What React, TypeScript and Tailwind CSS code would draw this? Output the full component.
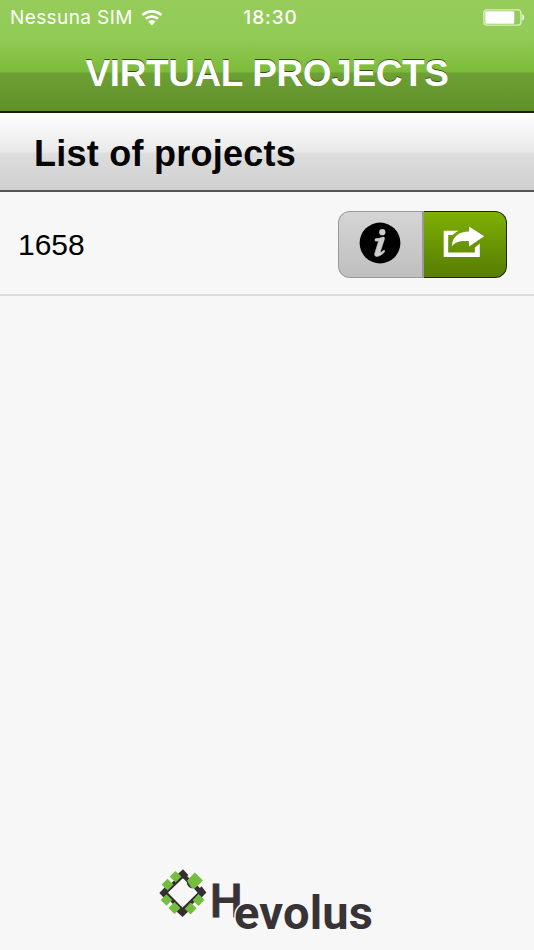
const projects = [{ id: 1, name: "1658" }];

function WifiIcon() {
  return (
    <svg width="22" height="18" viewBox="0 0 22 18" fill="none" stroke="white" strokeWidth="2.7">
      <path d="M1.4 6C7 1.1 14.8 1.1 20.4 6" />
      <path d="M4.8 9.8C8.3 6.7 13.5 6.7 17 9.8" />
      <path d="M10.9 16.4L7.2 12.6C9.2 10.9 12.6 10.9 14.6 12.6Z" fill="white" stroke="none" />
    </svg>
  );
}

function BatteryIcon() {
  return (
    <svg width="42" height="17" viewBox="0 0 42 17" fill="none">
      <rect x="0.9" y="0.9" width="37" height="15.2" rx="2.8" stroke="white" strokeOpacity="0.65" strokeWidth="1.4" />
      <rect x="2.3" y="2.2" width="29" height="12.6" rx="1" fill="white" />
      <path d="M39.3 5.2C41.7 5.8 41.7 10.9 39.3 11.5Z" fill="white" />
    </svg>
  );
}

function InfoIcon() {
  return (
    <svg width="42" height="42" viewBox="0 0 42 42">
      <circle cx="21" cy="21" r="20.4" fill="black" />
      <circle cx="23.3" cy="10.2" r="3.1" fill="#cdcdcd" />
      <path
        d="M17 16.6C20 16.6 22 15.9 24.2 15.1C25.4 15.1 25.7 16 25.3 17.4L21.2 30C21.5 30.9 23 29.5 24.5 28.4C25.6 27.9 26.2 28.9 25.4 29.9C23.5 32.3 20.2 34.5 17.6 34.5C15.7 34.3 15.4 32.9 15.9 31.1L19.4 19.7C19.5 18.9 18.3 19.1 17 19.2C15.5 18.9 15.5 16.9 17 16.6Z"
        fill="#cdcdcd"
        stroke="#cdcdcd"
        strokeWidth="0.6"
      />
    </svg>
  );
}

function ShareIcon() {
  return (
    <svg width="42" height="32" viewBox="0 0 42 32" fill="white">
      <path d="M0.7 4.7H15.7C13.1 6 11.2 7.3 9.8 9.1H5.2V26.4H31.8V21.8L36.8 17.6V31H0.7Z" />
      <path d="M8.8 20.4C9.3 10.2 16 5.5 26 5.4V0.5L41.2 10.2L26 20.6V15.2C18.5 14.4 12.8 15.1 8.8 20.4Z" />
    </svg>
  );
}

function Logo() {
  return (
    <svg className="overflow-visible" width="214" height="64" viewBox="160 868 214 64" aria-label="Hevolus">
      <path d="M193.5 886L183 875L165 892.5L182.5 910.5L201 892.5L195.5 887" fill="none" stroke="#332f31" strokeWidth="4.6" />
      <g fill="#332f31">
        <path d="M183 869.3L188.3 875L183.5 879.8L177.3 874.5Z" />
        <path d="M159.4 893L164.8 887.2L169 893L164.8 898.8Z" />
        <path d="M176 911L182.5 904.7L188.8 911L182.5 917Z" />
        <path d="M196 892L201.5 886.2L206.4 892.5L200.5 898.8Z" />
      </g>
      <path d="M183 878.2L168 892.8L182.5 907.5L197.6 892.5L191.8 887.5L187 883Z" fill="#f7f7f7" />
      <path d="M187 880.5C186.2 885.5 189.4 888.9 194 888.2Z" fill="#332f31" />
      <g fill="#74bd3e">
        <path d="M187 880.4L194.8 872.5L203 880.5L194.5 888.5L191 887.5Z" />
        <path d="M175.5 870.9L181.4 876.5L175.6 882.4L169.7 876.6Z" />
        <path d="M167.5 878.7L173.5 884.5L167.6 890.5L161.7 884.6Z" />
        <path d="M166.5 894.2L172.3 900L166.5 905.8L160.7 900Z" />
        <path d="M174.5 902.1L180.5 908L174.5 914L168.5 908.1Z" />
        <path d="M190.7 902.4L196.6 908.3L190.5 914.5L184.7 908.8Z" />
        <path d="M198.5 894.1L204.5 900L198.5 906L192.6 900.2Z" />
      </g>
      <text x="209.8" y="917" fill="#383335" stroke="#383335" strokeWidth="0.8" fontSize="46.5" fontWeight="500" fontFamily="Roboto, sans-serif" textLength="33" lengthAdjust="spacingAndGlyphs">
        H
      </text>
      <text
        x="234"
        y="928.5"
        fill="#383335"
        stroke="#f7f7f7"
        strokeWidth="3"
        paintOrder="stroke"
        fontSize="47"
        fontWeight="700"
        fontFamily="Roboto, sans-serif"
        textLength="139"
        lengthAdjust="spacing"
      >
        evolus
      </text>
    </svg>
  );
}

function App() {
  return (
    <div className="flex h-[950px] w-[534px] flex-col overflow-hidden bg-[#f7f7f7] font-['Liberation_Sans',Arial,sans-serif]">
      <header className="h-[113px] border-b-2 border-[#1a1f12] bg-[linear-gradient(to_bottom,#95cc5a_0px,#93cb57_38px,#7cbb38_72px,#6da034_73px,#5f9029_111px)] text-white">
        <div className="grid h-[35px] grid-cols-3 items-center pr-[9px] pl-[10px] font-[Inter,sans-serif] text-[19px]">
          <div className="flex items-center gap-[8px]">
            <span className="pt-[2px] tracking-[0.4px] whitespace-nowrap">Nessuna SIM</span>
            <WifiIcon />
          </div>
          <span className="pt-[2px] pl-[6px] text-center font-medium tracking-[0.9px]">18:30</span>
          <div className="flex justify-end">
            <BatteryIcon />
          </div>
        </div>
        <h1 className="pt-px text-center text-[37px] leading-[76px] font-bold tracking-[-0.4px] [text-shadow:0_-1.5px_0.5px_#2f5010]">
          VIRTUAL PROJECTS
        </h1>
      </header>

      <div className="h-[79px] border-b-2 border-[#555] bg-[linear-gradient(to_bottom,#ffffff_0px,#e9e9e9_39px,#dedede_40px,#cfcfcf_77px)] pl-[34px]">
        <h2 className="pt-px text-[36px] leading-[80px] font-bold tracking-[0.25px] text-[#050505]">List of projects</h2>
      </div>

      <ul>
        {projects.map((project) => (
          <li key={project.id} className="flex h-[104px] items-center justify-between border-b-2 border-[#dcdcdc] pt-[2px] pr-[27px] pl-[18px]">
            <span className="text-[30px] text-black">{project.name}</span>
            <div className="flex h-[67px] w-[169px]">
              <button className="flex w-[86px] items-center justify-center rounded-l-[12px] border border-r-2 border-[#999] bg-linear-to-b from-[#d5d5d5] to-[#bfbfbf] pr-px pb-[2px]">
                <InfoIcon />
              </button>
              <button className="flex w-[83px] items-center justify-center rounded-r-[12px] border border-l-0 border-[#1d2b05] bg-linear-to-b from-[#7eb004] to-[#577d03] pr-[3px] pb-[4px]">
                <ShareIcon />
              </button>
            </div>
          </li>
        ))}
      </ul>

      <footer className="mt-auto flex pb-[18px] pl-[160px]">
        <Logo />
      </footer>
    </div>
  );
}

export default App;
